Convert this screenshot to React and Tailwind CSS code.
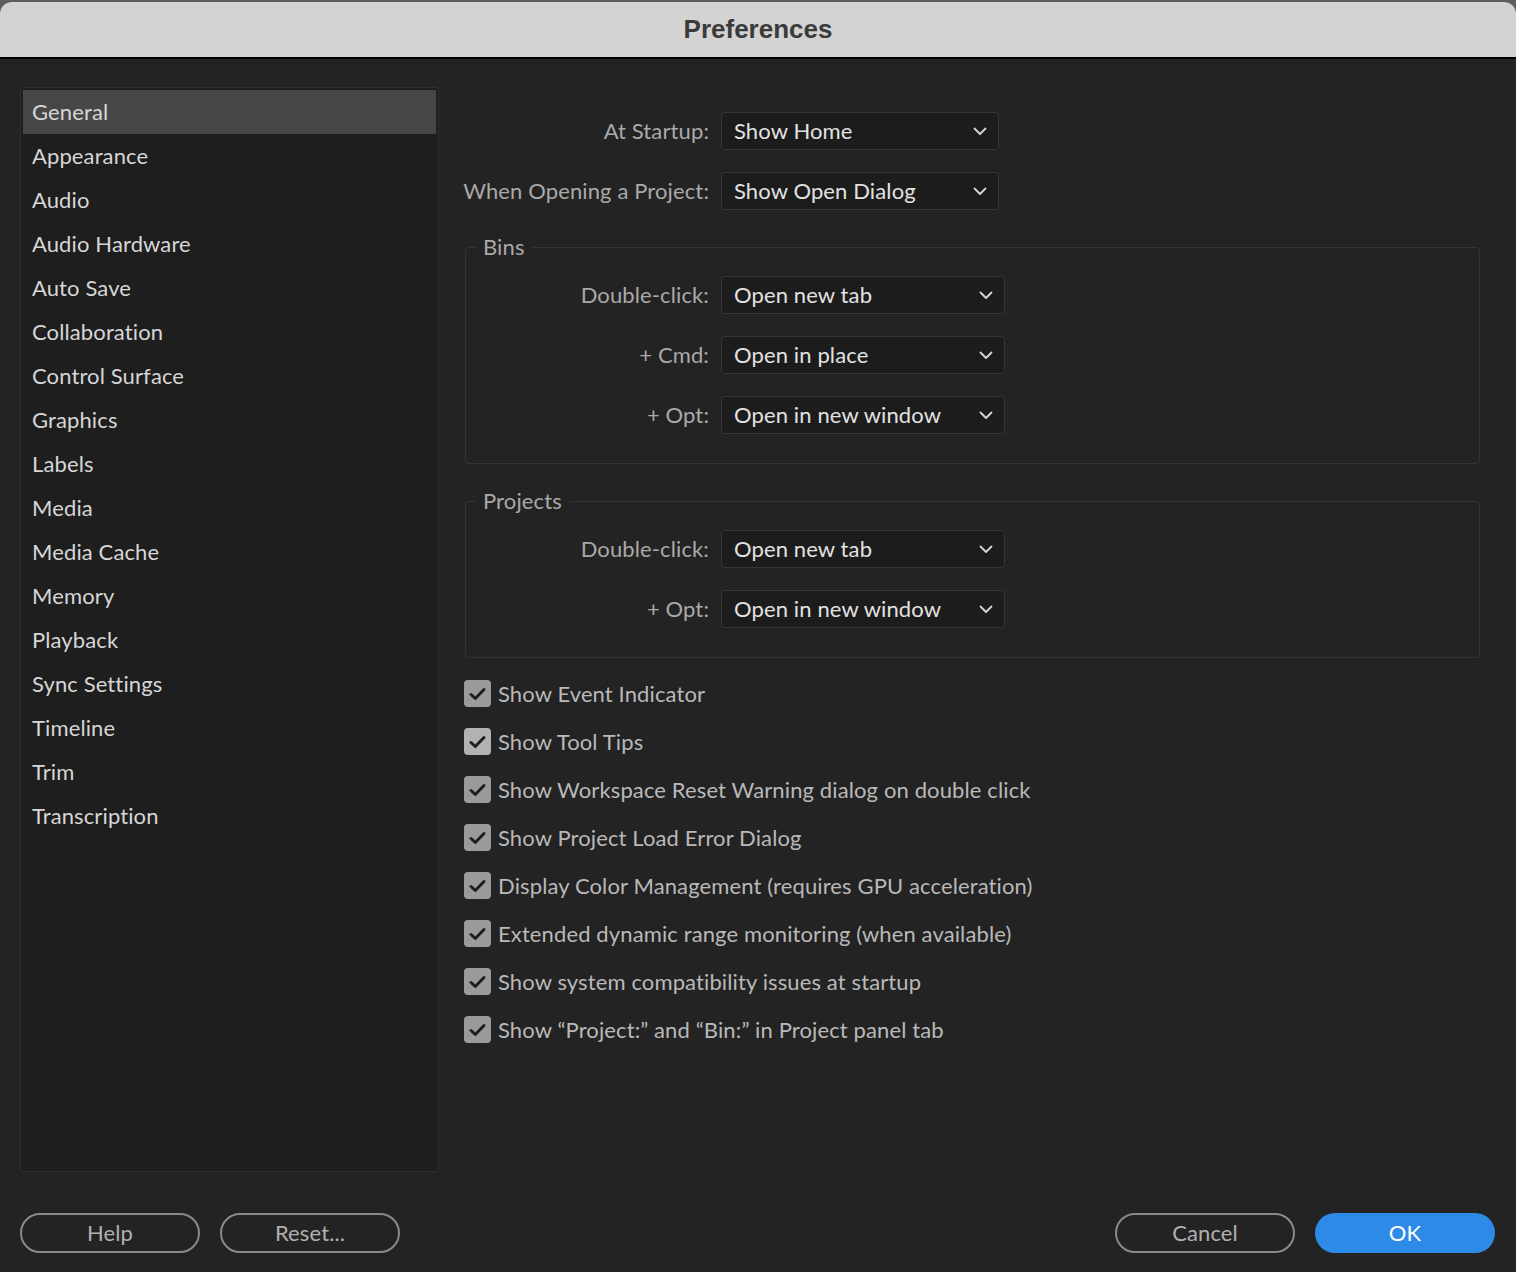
import React from 'react';

const FONT = { fontFamily: 'Lato, "Open Sans", sans-serif', letterSpacing: '0.12px' };

const CATEGORIES = [
  'General', 'Appearance', 'Audio', 'Audio Hardware', 'Auto Save', 'Collaboration',
  'Control Surface', 'Graphics', 'Labels', 'Media', 'Media Cache', 'Memory',
  'Playback', 'Sync Settings', 'Timeline', 'Trim', 'Transcription',
];

const CHECKS = [
  'Show Event Indicator',
  'Show Tool Tips',
  'Show Workspace Reset Warning dialog on double click',
  'Show Project Load Error Dialog',
  'Display Color Management (requires GPU acceleration)',
  'Extended dynamic range monitoring (when available)',
  'Show system compatibility issues at startup',
  'Show \u201cProject:\u201d and \u201cBin:\u201d in Project panel tab',
];

function Chevron() {
  return (
    <svg width="14" height="9" viewBox="0 0 14 9" fill="none">
      <path d="M1.5 1.5 L7 7 L12.5 1.5" stroke="#d6d6d6" strokeWidth="1.8" strokeLinecap="round" strokeLinejoin="round" />
    </svg>
  );
}

function Select({ value, wide }) {
  return (
    <div className={`${wide ? 'w-[284px]' : 'w-[278px]'} shrink-0 h-[38px] flex items-center justify-between pl-[12px] pr-[11px] bg-[#1c1c1c] border border-[#363636] rounded-[4px]`}>
      <span className="text-[22px] text-[#e2e2e2] leading-none whitespace-nowrap">{value}</span>
      <Chevron />
    </div>
  );
}

function Row({ label, value, wide, labelWidth }) {
  return (
    <div className="flex items-center h-[38px]">
      <div className={`${labelWidth} shrink-0 pr-[12px] flex justify-end text-[22px] text-[#a9a9a9] leading-none whitespace-nowrap`}>
        <span>{label}</span>
      </div>
      <Select value={value} wide={wide} />
    </div>
  );
}

function Group({ title, rows }) {
  return (
    <fieldset className="border border-[#343434] rounded-[4px] pt-[14px] pb-[29px] flex flex-col gap-[22px]">
      <legend className="ml-[9px] px-[8px] text-[22px] leading-[30px] text-[#a9a9a9]">{title}</legend>
      {rows.map(r => (
        <Row key={r.label} label={r.label} value={r.value} wide labelWidth="w-[255px]" />
      ))}
    </fieldset>
  );
}

function Checkbox({ label, light }) {
  return (
    <div className="flex items-center h-[27px] gap-[7px]">
      <div className={`w-[27px] h-[27px] shrink-0 rounded-[4px] flex items-center justify-center ${light ? 'bg-[#b2b2b2]' : 'bg-[#9a9a9a]'}`}>
        <svg width="17" height="14" viewBox="0 0 17 14" fill="none">
          <path d="M2 7.5 L6.3 11.5 L15 2.5" stroke="#1f1f1f" strokeWidth="3" strokeLinecap="round" strokeLinejoin="round" />
        </svg>
      </div>
      <span className="text-[22px] text-[#b9b9b9] leading-none whitespace-nowrap">{label}</span>
    </div>
  );
}

function PillButton({ children, primary }) {
  return (
    <button className={`w-[180px] h-[40px] rounded-full text-[22px] leading-none ${primary ? 'bg-[#2d8ae6] text-white' : 'border-2 border-[#8a8a8a] text-[#b0b0b0]'}`}>
      {children}
    </button>
  );
}

export default function App() {
  return (
    <div className="w-[1516px] h-[1272px] bg-[#5a5f5c] flex flex-col overflow-hidden" style={FONT}>
      <div className="mt-[2px] h-[57px] bg-[#d3d3d3] rounded-t-[12px] flex items-center justify-center border-b-2 border-black">
        <span className="text-[26px] font-bold text-[#3b3b3b] tracking-normal" style={{ fontFamily: '"Liberation Sans", Arial, sans-serif' }}>Preferences</span>
      </div>

      <div className="flex-1 bg-[#232323] flex flex-col px-[20px] pt-[28px] pb-[19px]">
        <div className="flex flex-1 gap-[25px]">
          {/* Category list */}
          <div className="w-[419px] h-[1085px] bg-[#1e1e1e] border border-[#2f2f2f] rounded-[3px] p-[2px]">
            {CATEGORIES.map((c, i) => (
              <div key={c} className={`h-[44px] flex items-center pl-[9px] pb-[2px] text-[22px] text-[#d6d6d6] ${i === 0 ? 'bg-[#474747]' : ''}`}>
                {c}
              </div>
            ))}
          </div>

          {/* Settings */}
          <div className="flex-1 flex flex-col pt-[25px] pr-[16px]">
            <div className="flex flex-col gap-[22px]">
              <Row label="At Startup:" value="Show Home" labelWidth="w-[257px]" />
              <Row label="When Opening a Project:" value="Show Open Dialog" labelWidth="w-[257px]" />
            </div>

            <div className="mt-[22px] flex flex-col gap-[22px] pl-[1px]">
              <Group
                title="Bins"
                rows={[
                  { label: 'Double-click:', value: 'Open new tab' },
                  { label: '+ Cmd:', value: 'Open in place' },
                  { label: '+ Opt:', value: 'Open in new window' },
                ]}
              />
              <Group
                title="Projects"
                rows={[
                  { label: 'Double-click:', value: 'Open new tab' },
                  { label: '+ Opt:', value: 'Open in new window' },
                ]}
              />
            </div>

            <div className="mt-[22px] flex flex-col gap-[21px]">
              {CHECKS.map((c, i) => (
                <Checkbox key={c} label={c} light={i === 1} />
              ))}
            </div>
          </div>
        </div>

        {/* Footer buttons */}
        <div className="flex items-center justify-between mt-[41px]">
          <div className="flex gap-[20px]">
            <PillButton>Help</PillButton>
            <PillButton>Reset...</PillButton>
          </div>
          <div className="flex gap-[20px] mr-[1px]">
            <PillButton>Cancel</PillButton>
            <PillButton primary>OK</PillButton>
          </div>
        </div>
      </div>
    </div>
  );
}
